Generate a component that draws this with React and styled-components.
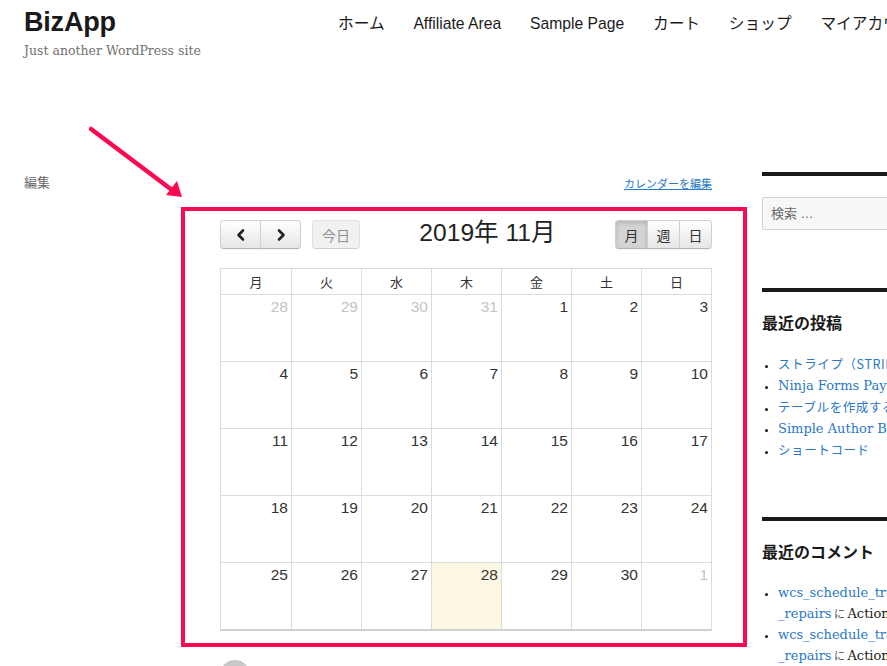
import React from "react"
import styled, { createGlobalStyle, css } from "styled-components"

const GlobalStyle = createGlobalStyle`
  html, body {
    margin: 0;
    padding: 0;
    background: #fff;
    overflow: hidden;
  }
  body {
    width: 887px;
    height: 666px;
    font-family: "Liberation Sans", "Noto Sans CJK JP", sans-serif;
    color: #1a1a1a;
  }
`

const sans = `"Liberation Sans", "Noto Sans CJK JP", sans-serif`
const serif = `"DejaVu Serif", "Noto Sans CJK JP", serif`
const RED = "#fb0a52"
const BLUE = "#2a78c6"

const weekdays = ["月", "火", "水", "木", "金", "土", "日"]

// other-month days flagged with o, today with t
const weeks = [
  [{ d: 28, o: 1 }, { d: 29, o: 1 }, { d: 30, o: 1 }, { d: 31, o: 1 }, { d: 1 }, { d: 2 }, { d: 3 }],
  [4, 5, 6, 7, 8, 9, 10].map((d) => ({ d })),
  [11, 12, 13, 14, 15, 16, 17].map((d) => ({ d })),
  [18, 19, 20, 21, 22, 23, 24].map((d) => ({ d })),
  [{ d: 25 }, { d: 26 }, { d: 27 }, { d: 28, t: 1 }, { d: 29 }, { d: 30 }, { d: 1, o: 1 }],
]

const recentPosts = [
  { text: "ストライプ（STRIPE）決済", jp: true },
  { text: "Ninja Forms PayPal Express" },
  { text: "テーブルを作成する方法", jp: true },
  { text: "Simple Author Box" },
  { text: "ショートコード", jp: true },
]

export default function App() {
  return (
    <>
      <GlobalStyle />
      <Page>
        <Header>
          <Branding>
            <SiteTitle>BizApp</SiteTitle>
            <Tagline>Just another WordPress site</Tagline>
          </Branding>
          <Nav>
            {["ホーム", "Affiliate Area", "Sample Page", "カート", "ショップ", "マイアカウント"].map((n) => (
              <NavItem key={n}>{n}</NavItem>
            ))}
          </Nav>
        </Header>

        <Main>
          <Meta>編集</Meta>
          <Content>
            <EditRow>
              <EditLink>カレンダーを編集</EditLink>
            </EditRow>
            <Highlight>
              <Calendar>
                <Toolbar>
                  <BtnGroup>
                    <Btn $first aria-label="prev">
                      <Chevron points="10,3.5 5.5,8 10,12.5" />
                    </Btn>
                    <Btn $last aria-label="next">
                      <Chevron points="6,3.5 10.5,8 6,12.5" />
                    </Btn>
                  </BtnGroup>
                  <Btn $single $disabled $text>今日</Btn>
                  <Title>2019年 11月</Title>
                  <BtnGroup>
                    <Btn $first $active $text $narrow>月</Btn>
                    <Btn $text $narrow>週</Btn>
                    <Btn $last $text $narrow>日</Btn>
                  </BtnGroup>
                </Toolbar>
                <Grid>
                  <HeadRow>
                    {weekdays.map((w) => (
                      <HeadCell key={w}>{w}</HeadCell>
                    ))}
                  </HeadRow>
                  {weeks.map((wk, i) => (
                    <WeekRow key={i}>
                      {wk.map((c, j) => (
                        <DayCell key={j} $today={c.t}>
                          <DayNum $other={c.o}>{c.d}</DayNum>
                        </DayCell>
                      ))}
                    </WeekRow>
                  ))}
                </Grid>
              </Calendar>
            </Highlight>
            <Avatar />
          </Content>

          <Sidebar>
            <Widget>
              <SearchInput placeholder="検索 …" />
            </Widget>
            <Widget $gap={58}>
              <WidgetTitle>最近の投稿</WidgetTitle>
              <List>
                {recentPosts.map((p) => (
                  <Item key={p.text}>
                    <LinkText $jp={p.jp}>{p.text}</LinkText>
                  </Item>
                ))}
              </List>
            </Widget>
            <Widget $gap={56}>
              <WidgetTitle>最近のコメント</WidgetTitle>
              <List>
                {[0, 1].map((i) => (
                  <Item key={i}>
                    <LinkText>wcs_schedule_tracker_</LinkText>
                    <br />
                    <LinkText>_repairs</LinkText>
                    <Small> に </Small>
                    <Plain>Action Scheduler</Plain>
                  </Item>
                ))}
              </List>
            </Widget>
          </Sidebar>
        </Main>

        <Arrow width="200" height="210" viewBox="0 0 200 210">
          <line x1="91" y1="129" x2="172" y2="190" stroke={RED} strokeWidth="4.5" strokeLinecap="round" />
          <polygon points="182,197 166,195 177,181" fill={RED} />
        </Arrow>
      </Page>
    </>
  )
}

const Page = styled.div`
  position: relative;
  width: 887px;
  height: 666px;
  overflow: hidden;
`

const Header = styled.header`
  display: flex;
  align-items: flex-start;
  padding: 6px 0 0 24px;
  height: 110px;
`

const Branding = styled.div`
  width: 314px;
  flex-shrink: 0;
`

const SiteTitle = styled.div`
  font-family: ${sans};
  font-weight: 700;
  font-size: 27px;
  line-height: 32px;
  color: #1a1a1a;
  letter-spacing: -0.2px;
`

const Tagline = styled.div`
  font-family: ${serif};
  font-size: 12.5px;
  line-height: 20px;
  margin-top: 3px;
  color: #707070;
`

const Nav = styled.nav`
  display: flex;
  gap: 28.8px;
  flex-shrink: 0;
  white-space: nowrap;
  padding-top: 8px;
`

const NavItem = styled.span`
  font-family: ${sans};
  font-size: 15.7px;
  line-height: 20px;
  color: #1a1a1a;
`

const Main = styled.main`
  display: grid;
  grid-template-columns: 142px 566px 300px;
  column-gap: 15px;
  align-items: start;
  padding: 0 0 0 24px;
  margin-top: 56px;
`

const Meta = styled.div`
  font-size: 13px;
  line-height: 20px;
  color: #686868;
  padding-top: 1px;
`

const Content = styled.div`
  display: flex;
  flex-direction: column;
`

const EditRow = styled.div`
  display: flex;
  justify-content: flex-end;
  padding: 4px 35px 0 0;
  height: 16px;
`

const EditLink = styled.a`
  font-size: 11px;
  line-height: 16px;
  color: ${BLUE};
  text-decoration: underline;
`

const Highlight = styled.div`
  margin-top: 15px;
  border: 4px solid ${RED};
  padding: 9px 31px 12px 35px;
`

const Calendar = styled.div`
  width: 492px;
  font-family: ${sans};
`

const Toolbar = styled.div`
  display: flex;
  align-items: center;
  height: 29px;
  margin-bottom: 19px;
`

const BtnGroup = styled.div`
  display: flex;
`

const Btn = styled.button`
  height: 29px;
  width: ${(p) => (p.$narrow ? "33px" : p.$text ? "48px" : "41px")};
  padding: 0;
  display: flex;
  align-items: center;
  justify-content: center;
  font-family: ${sans};
  font-size: 14px;
  color: #333;
  background: linear-gradient(#fff, #e6e6e6);
  border: 1px solid #d0d0d0;
  border-bottom-color: #b3b3b3;
  box-shadow: inset 0 1px 0 rgba(255, 255, 255, 0.2), 0 1px 2px rgba(0, 0, 0, 0.05);
  border-radius: 0;
  margin-left: -1px;
  ${(p) => p.$first && css`border-radius: 4px 0 0 4px; margin-left: 0;`}
  ${(p) => p.$last && css`border-radius: 0 4px 4px 0;`}
  ${(p) =>
    p.$single &&
    css`
      border-radius: 4px;
      margin-left: 11px;
    `}
  ${(p) =>
    p.$disabled &&
    css`
      opacity: 0.65;
      box-shadow: none;
      background: #ebebeb;
      color: #555;
    `}
  ${(p) =>
    p.$active &&
    css`
      background: #d4d4d4;
      box-shadow: inset 0 2px 4px rgba(0, 0, 0, 0.15), 0 1px 2px rgba(0, 0, 0, 0.05);
    `}
`

const ChevronSvg = styled.svg`
  display: block;
`

const Chevron = ({ points }) => (
  <ChevronSvg width="16" height="16" viewBox="0 0 16 16">
    <polyline points={points} fill="none" stroke="#222" strokeWidth="2.6" strokeLinecap="round" strokeLinejoin="round" />
  </ChevronSvg>
)

const Title = styled.h2`
  flex: 1;
  margin: 0;
  text-align: center;
  font-weight: 400;
  font-size: 24.6px;
  line-height: 30px;
  color: #222;
  padding-bottom: 3px;
`

const Grid = styled.div`
  border: 1px solid #dcdcdc;
  border-bottom: 2px solid #d2d2d2;
`

const rowCols = css`
  display: grid;
  grid-template-columns: repeat(7, 1fr);
`

const HeadRow = styled.div`
  ${rowCols};
  height: 25px;
  border-bottom: 1px solid #dcdcdc;
`

const HeadCell = styled.div`
  display: flex;
  align-items: center;
  justify-content: center;
  font-size: 13px;
  color: #333;
  & + & {
    border-left: 1px solid #dcdcdc;
  }
`

const WeekRow = styled.div`
  ${rowCols};
  height: 66px;
  & + & {
    border-top: 1px solid #dcdcdc;
  }
`

const DayCell = styled.div`
  background: ${(p) => (p.$today ? "#fcf8e3" : "#fff")};
  text-align: right;
  padding: 2px 3px 0 0;
  & + & {
    border-left: 1px solid #dcdcdc;
  }
`

const DayNum = styled.span`
  font-size: 15.5px;
  line-height: 20px;
  color: ${(p) => (p.$other ? "#c4c4c4" : "#333")};
`

const Avatar = styled.div`
  width: 30px;
  height: 30px;
  border-radius: 50%;
  background: #c8c8c8;
  margin: 13px 0 0 39px;
`

const Sidebar = styled.aside`
  display: flex;
  flex-direction: column;
`

const Widget = styled.section`
  border-top: 4px solid #1a1a1a;
  margin-top: ${(p) => p.$gap || 0}px;
`

const SearchInput = styled.input`
  display: block;
  box-sizing: border-box;
  margin-top: 21px;
  width: 300px;
  height: 33px;
  padding: 0 8px;
  background: #f7f7f7;
  border: 1px solid #d1d1d1;
  border-radius: 2px;
  font-family: ${sans};
  font-size: 13px;
  &::placeholder {
    color: #686868;
  }
`

const WidgetTitle = styled.h2`
  margin: 18px 0 0;
  font-family: "Noto Sans CJK JP", sans-serif;
  font-weight: 700;
  font-size: 16px;
  line-height: 24px;
  color: #1a1a1a;
`

const List = styled.ul`
  margin: 19px 0 0;
  padding-left: 16px;
  list-style: disc;
  white-space: nowrap;
`

const Item = styled.li`
  font-family: ${serif};
  font-size: 13px;
  line-height: 21px;
  color: #1a1a1a;
  &::marker {
    font-size: 11px;
  }
`

const LinkText = styled.span`
  color: ${BLUE};
  font-family: ${(p) => (p.$jp ? `"Noto Sans CJK JP", sans-serif` : serif)};
  font-size: ${(p) => (p.$jp ? "12.5px" : "13px")};
  letter-spacing: ${(p) => (p.$jp ? "0.6px" : "0")};
`

const Small = styled.span`
  font-family: "Noto Sans CJK JP", sans-serif;
  font-size: 11px;
  color: #555;
`

const Plain = styled.span`
  color: #1a1a1a;
`

const Arrow = styled.svg`
  position: absolute;
  left: 0;
  top: 0;
  pointer-events: none;
`
